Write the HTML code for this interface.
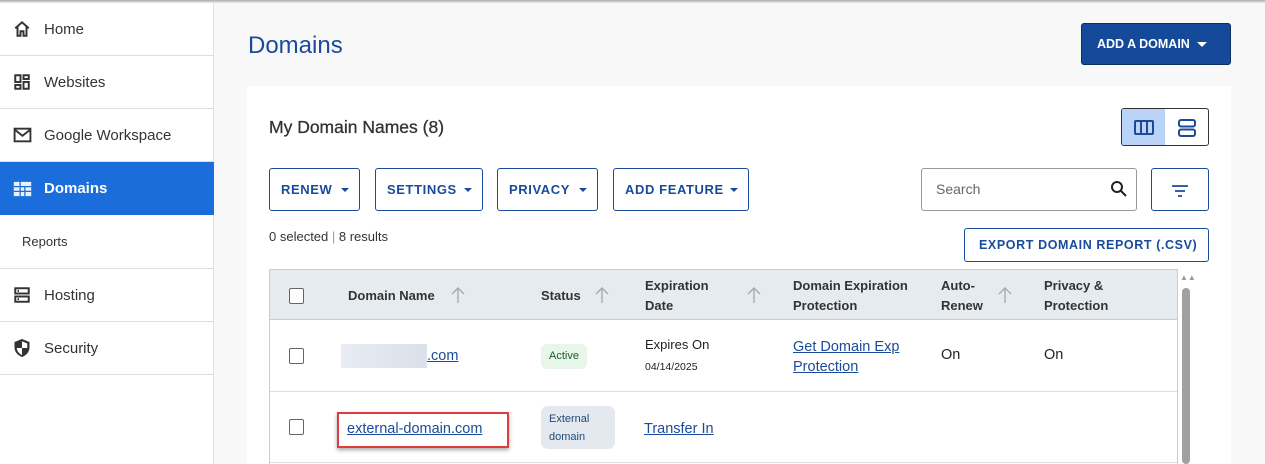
<!DOCTYPE html>
<html><head><style>
*{box-sizing:border-box;margin:0;padding:0}
body{width:1265px;height:464px;overflow:hidden;background:#f8f8f8;font-family:"Liberation Sans",sans-serif;position:relative;color:#333}
.a{position:absolute}
.top{left:0;top:0;width:1265px;height:3px;background:linear-gradient(#aaa,#eee)}
.side{left:0;top:3px;width:214px;height:461px;background:#fff;border-right:1px solid #e2e2e2}
.item{position:absolute;left:0;width:214px;border-bottom:1px solid #ddd;display:flex;align-items:center;font-size:15px;color:#333}
.item svg{position:absolute;left:13px}
.item span{position:absolute;left:44px}
.btn{position:absolute;border:1px solid #1a4b9b;border-radius:3px;background:#fff;color:#1a4b9b;font-weight:bold;font-size:13px;letter-spacing:.6px;display:flex;align-items:center;padding-left:11px}
.btn i{position:absolute;right:10px;top:19px;border:4px solid transparent;border-top:4px solid #1a4b9b;border-bottom:0}
.th{position:absolute;font-size:13px;font-weight:bold;color:#333;line-height:20px}
.cb{position:absolute;width:15px;height:16px;border:1px solid #666;border-radius:2px;background:#fff}
.lnk{position:absolute;color:#1a4b9b;text-decoration:underline;font-size:14.5px;line-height:20px}
.ar{position:absolute;width:14px;height:18px}
</style></head><body>
<div class="a top"></div>
<div class="a side">
 <div class="item" style="top:0;height:53px"><svg width="18" height="18" viewBox="0 0 24 24"><path d="M3 11L12 3l9 8M6 9v12h4v-6h4v6h4V9" fill="none" stroke="#333" stroke-width="2.6"/></svg><span>Home</span></div>
 <div class="item" style="top:53px;height:53px"><svg width="18" height="18" viewBox="0 0 24 24" fill="none" stroke="#333" stroke-width="2.6"><rect x="3" y="3" width="7" height="9"/><rect x="14" y="3" width="7" height="5"/><rect x="3" y="16" width="7" height="5"/><rect x="14" y="12" width="7" height="9"/></svg><span>Websites</span></div>
 <div class="item" style="top:106px;height:53px"><svg width="19" height="16" viewBox="0 0 24 20" fill="none" stroke="#333" stroke-width="2.4"><rect x="2" y="2" width="20" height="16"/><path d="M2 3l10 8 10-8"/></svg><span>Google Workspace</span></div>
 <div class="item" style="top:159px;height:53px;background:#1b6ddc;color:#fff;font-weight:bold;border:0"><svg width="19" height="18" viewBox="0 0 24 22"><rect x="1" y="2" width="22" height="18" fill="#fff" opacity=".9"/><path d="M9 2v18M1 8h22M1 14h22M15 8v12" stroke="#1b6ddc" stroke-width="1.6"/></svg><span>Domains</span></div>
 <div class="item" style="top:212px;height:54px;font-size:13px"><span style="left:22px">Reports</span></div>
 <div class="item" style="top:266px;height:53px"><svg width="18" height="18" viewBox="0 0 24 24" fill="none" stroke="#333" stroke-width="2.6"><rect x="3" y="3" width="18" height="7"/><rect x="3" y="14" width="18" height="7"/><path d="M6 6.5h2M6 17.5h2"/></svg><span>Hosting</span></div>
 <div class="item" style="top:319px;height:53px"><svg width="18" height="20" viewBox="0 0 24 26"><path d="M12 1L2 5v7c0 7 5 11 10 13 5-2 10-6 10-13V5z" fill="#333"/><path d="M12 4v9H5c.5 5 4 8 7 9.5V13h7V7z" fill="#fff"/></svg><span>Security</span></div>
</div>
<div class="a" style="left:248px;top:32px;font-size:24px;color:#1a4b9b">Domains</div>
<div class="a" style="left:1081px;top:23px;width:150px;height:42px;background:#154a9a;border:1px solid #0d2f66;border-radius:3px;color:#fff;font-weight:bold;font-size:12.5px;display:flex;align-items:center;padding-left:15px">ADD A DOMAIN<i style="margin-left:7px;border:5px solid transparent;border-top:5px solid #fff;border-bottom:0"></i></div>
<div class="a" style="left:247px;top:86px;width:984px;height:378px;background:#fff"></div>
<div class="a" style="left:269px;top:117px;font-size:17.5px;color:#333;-webkit-text-stroke:.3px #333">My Domain Names (8)</div>
<div class="a" style="left:1121px;top:108px;width:88px;height:38px;border:1px solid #333;border-radius:3px;overflow:hidden;background:#fff">
 <div style="position:absolute;left:0;top:0;width:43px;height:38px;background:#bad3f7"></div>
 <svg class="a" style="left:12px;top:11px" width="20" height="15" viewBox="0 0 20 15" fill="none" stroke="#1a4b9b" stroke-width="2"><rect x="1" y="1" width="18" height="13" rx="1"/><path d="M7 1v13M13 1v13"/></svg>
 <svg class="a" style="left:56px;top:10px" width="18" height="18" viewBox="0 0 18 18" fill="none" stroke="#1a4b9b" stroke-width="2"><rect x="1" y="1" width="16" height="6.5" rx="2"/><rect x="1" y="10.5" width="16" height="6.5" rx="2"/></svg>
</div>
<div class="btn" style="left:269px;top:168px;width:91px;height:43px">RENEW<i></i></div>
<div class="btn" style="left:375px;top:168px;width:108px;height:43px">SETTINGS<i></i></div>
<div class="btn" style="left:497px;top:168px;width:101px;height:43px">PRIVACY<i></i></div>
<div class="btn" style="left:613px;top:168px;width:136px;height:43px">ADD FEATURE<i></i></div>
<div class="a" style="left:921px;top:168px;width:216px;height:43px;border:1px solid #999;border-radius:3px;background:#fff;font-size:14px;color:#666;padding:12px 0 0 14px">Search
 <svg class="a" style="left:188px;top:11px" width="18" height="18" viewBox="0 0 18 18" fill="none" stroke="#222" stroke-width="2"><circle cx="7" cy="7" r="5"/><path d="M11 11l5 5"/></svg></div>
<div class="a" style="left:1151px;top:168px;width:58px;height:43px;border:1px solid #1a4b9b;border-radius:3px;background:#fff">
 <svg class="a" style="left:20px;top:16px" width="16" height="12" viewBox="0 0 16 12" stroke="#1a4b9b" stroke-width="1.8"><path d="M0 1h16M3 6h10M6 11h4"/></svg></div>
<div class="a" style="left:269px;top:229px;font-size:13px;color:#333">0 selected <span style="color:#7aa5d8">|</span> 8 results</div>
<div class="btn" style="left:964px;top:228px;width:245px;height:34px;padding-left:14px;font-size:12.5px">EXPORT DOMAIN REPORT (.CSV)</div>
<div class="a" style="left:269px;top:269px;width:909px;height:195px;border:1px solid #ccc;border-bottom:0"></div>
<div class="a" style="left:270px;top:270px;width:907px;height:50px;background:#e6ebef;border-bottom:1px solid #ccc"></div>
<div class="cb" style="left:289px;top:288px"></div>
<div class="th" style="left:348px;top:286px">Domain Name</div><svg class="ar" style="left:451px;top:286px" viewBox="0 0 14 18" fill="none" stroke="#aaa" stroke-width="1.4"><path d="M7 17V2M1 8l6-6 6 6"/></svg>
<div class="th" style="left:541px;top:286px">Status</div><svg class="ar" style="left:595px;top:286px" viewBox="0 0 14 18" fill="none" stroke="#aaa" stroke-width="1.4"><path d="M7 17V2M1 8l6-6 6 6"/></svg>
<div class="th" style="left:645px;top:276px">Expiration<br>Date</div><svg class="ar" style="left:747px;top:286px" viewBox="0 0 14 18" fill="none" stroke="#aaa" stroke-width="1.4"><path d="M7 17V2M1 8l6-6 6 6"/></svg>
<div class="th" style="left:793px;top:276px">Domain Expiration<br>Protection</div>
<div class="th" style="left:941px;top:276px">Auto-<br>Renew</div><svg class="ar" style="left:998px;top:286px" viewBox="0 0 14 18" fill="none" stroke="#aaa" stroke-width="1.4"><path d="M7 17V2M1 8l6-6 6 6"/></svg>
<div class="th" style="left:1044px;top:276px">Privacy &amp;<br>Protection</div>
<div class="a" style="left:270px;top:391px;width:907px;height:1px;background:#ddd"></div>
<div class="a" style="left:270px;top:462px;width:907px;height:1px;background:#ddd"></div>
<div class="cb" style="left:289px;top:348px"></div>
<div class="a" style="left:341px;top:344px;width:86px;height:24px;background:linear-gradient(90deg,#e8ebf2,#dbe0ea)"></div>
<div class="lnk" style="left:427px;top:346px">.com</div>
<div class="a" style="left:541px;top:344px;width:46px;height:25px;background:#e8f6e9;border-radius:6px;font-size:11px;color:#1d5c2a;text-align:center;line-height:25px">Active</div>
<div class="a" style="left:645px;top:337px;font-size:13px;color:#222">Expires On</div>
<div class="a" style="left:645px;top:361px;font-size:10.5px;color:#222">04/14/2025</div>
<div class="lnk" style="left:793px;top:337px">Get Domain Exp<br>Protection</div>
<div class="a" style="left:941px;top:347px;font-size:14.5px;color:#222">On</div>
<div class="a" style="left:1044px;top:347px;font-size:14.5px;color:#222">On</div>
<div class="cb" style="left:289px;top:419px"></div>
<div class="a" style="left:337px;top:412px;width:172px;height:36px;border:2px solid #e03c3c;box-shadow:0 2px 4px rgba(0,0,0,.35)"></div>
<div class="lnk" style="left:347px;top:419px">external-domain.com</div>
<div class="a" style="left:541px;top:406px;width:74px;height:43px;background:#e3e9ef;border-radius:7px;font-size:11px;color:#1d4a7a;padding:4px 0 0 8px;line-height:18px">External<br>domain</div>
<div class="lnk" style="left:644px;top:419px">Transfer In</div>
<div class="a" style="left:1180px;top:273px;font-size:8px;color:#999">▲▲</div>
<div class="a" style="left:1182px;top:288px;width:8px;height:176px;background:#a0a0a0;border-radius:4px"></div>
</body></html>
